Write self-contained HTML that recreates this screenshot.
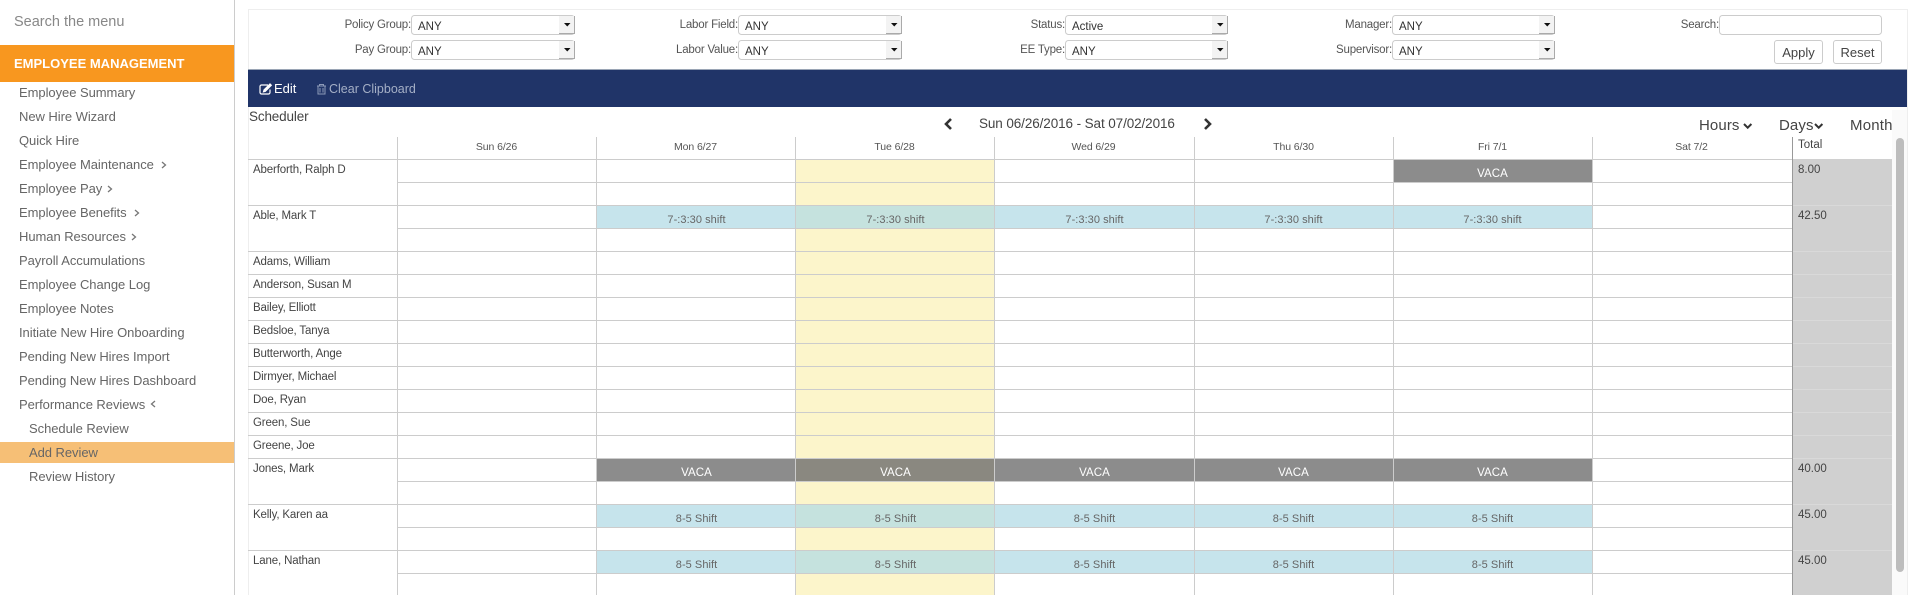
<!DOCTYPE html>
<html><head><meta charset="utf-8"><title>Scheduler</title>
<style>
html,body{margin:0;padding:0;width:1920px;height:595px;overflow:hidden;background:#fff}
body{position:relative;font-family:"Liberation Sans",sans-serif;color:#444}
svg.bg{position:absolute;left:0;top:0}
.t{position:absolute;white-space:nowrap;line-height:20px;height:20px}
.m{left:19px;font-size:13px;color:#666;letter-spacing:-.05px;margin-top:1px}
.s{left:29px}
.n{left:253px;font-size:11.5px;color:#444;letter-spacing:-.15px;margin-top:1px}
.h{font-size:10.5px;color:#555;width:199px;text-align:center;letter-spacing:-.1px;top:137px}
.b{font-size:11px;color:#666;width:199px;text-align:center;letter-spacing:.05px;margin-top:1px}
.v{font-size:11.5px;color:#fff;width:199px;text-align:center;letter-spacing:.1px;margin-top:1px}
.l{font-size:11.5px;color:#555;text-align:right;letter-spacing:-.2px;margin-top:1px}
.o{font-size:11.5px;color:#333;margin-top:1px}
.tot{left:1798px;font-size:11.5px;color:#444;margin-top:1px}
.bt{position:absolute;box-sizing:border-box;border:1px solid #ccc;border-radius:3px;font-size:13px;color:#444;text-align:center;line-height:23px;height:24px;top:40px;background:#fff}
</style></head><body>
<svg class="bg" width="1920" height="595" viewBox="0 0 1920 595" shape-rendering="crispEdges" xmlns="http://www.w3.org/2000/svg">
<!-- sidebar -->
<rect x="234" y="0" width="1" height="595" fill="#ccc"/>
<rect x="0" y="45" width="234" height="37" fill="#F8971F"/>
<rect x="0" y="442" width="234" height="21" fill="#F6BF76"/>
<!-- panel -->
<rect x="248" y="9" width="1659" height="1" fill="#eee"/>
<rect x="248" y="9" width="1" height="586" fill="#eee"/>
<rect x="1907" y="9" width="1" height="586" fill="#eee"/>
<rect x="248" y="69" width="1659" height="1" fill="#9aa5b5"/>
<rect x="248" y="70" width="1659" height="37" fill="#203468"/>
<!-- columns -->
<rect x="795" y="159" width="199" height="436" fill="#FCF5CB"/>
<rect x="1792" y="159" width="100" height="436" fill="#D0D0D0"/>
<!-- blue blocks -->
<g fill="#C6E4EC">
<rect x="596" y="206" width="996" height="22"/>
<rect x="596" y="505" width="996" height="22"/>
<rect x="596" y="551" width="996" height="22"/>
</g>
<g fill="#C5E2DE">
<rect x="795" y="206" width="199" height="22"/>
<rect x="795" y="505" width="199" height="22"/>
<rect x="795" y="551" width="199" height="22"/>
</g>
<!-- grey blocks -->
<g fill="#8C8C8C">
<rect x="1393" y="160" width="199" height="22"/>
<rect x="596" y="459" width="996" height="22"/>
</g>
<rect x="795" y="459" width="199" height="22" fill="#8A8880"/>
<!-- full width horizontal lines -->
<g fill="#CCCCCC">
<rect x="248" y="159" width="1544" height="1"/>
<rect x="248" y="205" width="1544" height="1"/>
<rect x="248" y="251" width="1544" height="1"/>
<rect x="248" y="274" width="1544" height="1"/>
<rect x="248" y="297" width="1544" height="1"/>
<rect x="248" y="320" width="1544" height="1"/>
<rect x="248" y="343" width="1544" height="1"/>
<rect x="248" y="366" width="1544" height="1"/>
<rect x="248" y="389" width="1544" height="1"/>
<rect x="248" y="412" width="1544" height="1"/>
<rect x="248" y="435" width="1544" height="1"/>
<rect x="248" y="458" width="1544" height="1"/>
<rect x="248" y="504" width="1544" height="1"/>
<rect x="248" y="550" width="1544" height="1"/>
<rect x="397" y="182" width="1395" height="1"/>
<rect x="397" y="228" width="1395" height="1"/>
<rect x="397" y="481" width="1395" height="1"/>
<rect x="397" y="527" width="1395" height="1"/>
<rect x="397" y="573" width="1395" height="1"/>
<!-- verticals -->
<rect x="397" y="137" width="1" height="458"/>
<rect x="596" y="137" width="1" height="458"/>
<rect x="795" y="137" width="1" height="458"/>
<rect x="994" y="137" width="1" height="458"/>
<rect x="1194" y="137" width="1" height="458"/>
<rect x="1393" y="137" width="1" height="458"/>
<rect x="1592" y="137" width="1" height="458"/>
</g>
<rect x="1792" y="137" width="1" height="458" fill="#999"/>
<g fill="#D9D9D9">
<rect x="1793" y="205" width="99" height="1"/><rect x="1793" y="251" width="99" height="1"/>
<rect x="1793" y="274" width="99" height="1"/><rect x="1793" y="297" width="99" height="1"/>
<rect x="1793" y="320" width="99" height="1"/><rect x="1793" y="343" width="99" height="1"/>
<rect x="1793" y="366" width="99" height="1"/><rect x="1793" y="389" width="99" height="1"/>
<rect x="1793" y="412" width="99" height="1"/><rect x="1793" y="435" width="99" height="1"/>
<rect x="1793" y="458" width="99" height="1"/><rect x="1793" y="504" width="99" height="1"/>
<rect x="1793" y="550" width="99" height="1"/>
</g>
<rect x="1892" y="110" width="15" height="485" fill="#fafafa"/>
<rect x="1896" y="138" width="8" height="434" rx="4" fill="#BDBDBD" shape-rendering="auto"/>
<!-- select boxes -->
<g fill="#fff" stroke="#ccc" shape-rendering="auto">
<rect x="411.500" y="15.500" width="163" height="19" rx="3"/><rect x="411.500" y="40.500" width="163" height="19" rx="3"/>
<rect x="738.500" y="15.500" width="163" height="19" rx="3"/><rect x="738.500" y="40.500" width="163" height="19" rx="3"/>
<rect x="1065.500" y="15.500" width="162" height="19" rx="3"/><rect x="1065.500" y="40.500" width="162" height="19" rx="3"/>
<rect x="1392.500" y="15.500" width="162" height="19" rx="3"/><rect x="1392.500" y="40.500" width="162" height="19" rx="3"/>
<rect x="1719.500" y="15.500" width="162" height="19" rx="3"/>
</g>
<!-- select arrows -->
<g>
<g><rect x="559" y="16" width="16" height="18" fill="#aaa"/><rect x="559" y="16" width="15" height="17" fill="#f3f3f3"/><path d="M564 23h6.500l-3.250 3.500z" fill="#111" shape-rendering="auto"/></g>
<g transform="translate(0,25)"><rect x="559" y="16" width="16" height="18" fill="#aaa"/><rect x="559" y="16" width="15" height="17" fill="#f3f3f3"/><path d="M564 23h6.500l-3.250 3.500z" fill="#111" shape-rendering="auto"/></g>
<g transform="translate(327,0)"><rect x="559" y="16" width="16" height="18" fill="#aaa"/><rect x="559" y="16" width="15" height="17" fill="#f3f3f3"/><path d="M564 23h6.500l-3.250 3.500z" fill="#111" shape-rendering="auto"/></g>
<g transform="translate(327,25)"><rect x="559" y="16" width="16" height="18" fill="#aaa"/><rect x="559" y="16" width="15" height="17" fill="#f3f3f3"/><path d="M564 23h6.500l-3.250 3.500z" fill="#111" shape-rendering="auto"/></g>
<g transform="translate(653,0)"><rect x="559" y="16" width="16" height="18" fill="#aaa"/><rect x="559" y="16" width="15" height="17" fill="#f3f3f3"/><path d="M564 23h6.500l-3.250 3.500z" fill="#111" shape-rendering="auto"/></g>
<g transform="translate(653,25)"><rect x="559" y="16" width="16" height="18" fill="#aaa"/><rect x="559" y="16" width="15" height="17" fill="#f3f3f3"/><path d="M564 23h6.500l-3.250 3.500z" fill="#111" shape-rendering="auto"/></g>
<g transform="translate(980,0)"><rect x="559" y="16" width="16" height="18" fill="#aaa"/><rect x="559" y="16" width="15" height="17" fill="#f3f3f3"/><path d="M564 23h6.500l-3.250 3.500z" fill="#111" shape-rendering="auto"/></g>
<g transform="translate(980,25)"><rect x="559" y="16" width="16" height="18" fill="#aaa"/><rect x="559" y="16" width="15" height="17" fill="#f3f3f3"/><path d="M564 23h6.500l-3.250 3.500z" fill="#111" shape-rendering="auto"/></g>
</g>
<!-- sidebar chevrons -->
<g fill="none" stroke="#777" stroke-width="1.300" shape-rendering="auto">
<path d="M162 162l3.500 3-3.500 3"/>
<path d="M108 186l3.500 3-3.500 3"/>
<path d="M135 210l3.500 3-3.500 3"/>
<path d="M132 234l3.500 3-3.500 3"/>
<path d="M155 401l-3.500 3 3.500 3"/>
</g>
<!-- nav chevrons -->
<g fill="none" stroke="#333" stroke-width="2.600" shape-rendering="auto">
<path d="M951 119l-5 5 5 5"/>
<path d="M1205 119l5 5-5 5"/>
</g>
<g fill="none" stroke="#333" stroke-width="2" shape-rendering="auto">
<path d="M1744 124l3.700 3.700 3.700-3.700"/>
<path d="M1815 124l3.700 3.700 3.700-3.700"/>
</g>
<!-- edit icon -->
<g fill="none" stroke="#fff" stroke-width="1.200" shape-rendering="auto">
<path d="M268 85h-6.500a1.500 1.500 0 0 0-1.500 1.500v6a1.500 1.500 0 0 0 1.500 1.500h7a1.500 1.500 0 0 0 1.500-1.500v-3"/>
<path d="M264 90l-.5 1.800 1.800-.5 6-6-1.300-1.300z" fill="#fff"/>
</g>
<!-- trash icon -->
<g fill="none" stroke="#8c9ab8" stroke-width="1" shape-rendering="auto">
<path d="M317 86h9M319.500 86v-1.500h4V86M318 86.500v7.500h7v-7.500M320 88v4.500M323 88v4.500"/>
</g>
</svg>

<div class="t" style="left:14px;top:12px;font-size:14.500px;color:#888">Search the menu</div>
<div class="t" style="left:14px;top:54px;font-size:13px;font-weight:bold;color:#fff">EMPLOYEE MANAGEMENT</div>
<div class="t m" style="top:82px">Employee Summary</div>
<div class="t m" style="top:106px">New Hire Wizard</div>
<div class="t m" style="top:130px">Quick Hire</div>
<div class="t m" style="top:154px">Employee Maintenance</div>
<div class="t m" style="top:178px">Employee Pay</div>
<div class="t m" style="top:202px">Employee Benefits</div>
<div class="t m" style="top:226px">Human Resources</div>
<div class="t m" style="top:250px">Payroll Accumulations</div>
<div class="t m" style="top:274px">Employee Change Log</div>
<div class="t m" style="top:298px">Employee Notes</div>
<div class="t m" style="top:322px">Initiate New Hire Onboarding</div>
<div class="t m" style="top:346px">Pending New Hires Import</div>
<div class="t m" style="top:370px">Pending New Hires Dashboard</div>
<div class="t m" style="top:394px">Performance Reviews</div>
<div class="t m s" style="top:418px">Schedule Review</div>
<div class="t m s" style="top:442px">Add Review</div>
<div class="t m s" style="top:466px">Review History</div>

<div class="t l" style="left:311px;width:100px;top:14px">Policy Group:</div>
<div class="t l" style="left:311px;width:100px;top:39px">Pay Group:</div>
<div class="t l" style="left:638px;width:100px;top:14px">Labor Field:</div>
<div class="t l" style="left:638px;width:100px;top:39px">Labor Value:</div>
<div class="t l" style="left:965px;width:100px;top:14px">Status:</div>
<div class="t l" style="left:965px;width:100px;top:39px">EE Type:</div>
<div class="t l" style="left:1292px;width:100px;top:14px">Manager:</div>
<div class="t l" style="left:1292px;width:100px;top:39px">Supervisor:</div>
<div class="t l" style="left:1619px;width:100px;top:14px">Search:</div>
<div class="t o" style="left:418px;top:16px">ANY</div>
<div class="t o" style="left:418px;top:41px">ANY</div>
<div class="t o" style="left:745px;top:16px">ANY</div>
<div class="t o" style="left:745px;top:41px">ANY</div>
<div class="t o" style="left:1072px;top:16px">Active</div>
<div class="t o" style="left:1072px;top:41px">ANY</div>
<div class="t o" style="left:1399px;top:16px">ANY</div>
<div class="t o" style="left:1399px;top:41px">ANY</div>
<div class="bt" style="left:1774px;width:49px">Apply</div>
<div class="bt" style="left:1833px;width:49px">Reset</div>

<div class="t" style="left:274px;top:79px;font-size:13px;color:#fff">Edit</div>
<div class="t" style="left:329px;top:79px;font-size:12.500px;color:#a4afc6">Clear Clipboard</div>
<div class="t" style="left:249px;top:107px;font-size:13.500px;color:#444;letter-spacing:-.15px">Scheduler</div>
<div class="t" style="left:979px;top:114px;font-size:13.500px;color:#444;letter-spacing:-.1px">Sun 06/26/2016 - Sat 07/02/2016</div>
<div class="t" style="left:1699px;top:116px;font-size:15px;color:#444;letter-spacing:.1px">Hours</div>
<div class="t" style="left:1779px;top:116px;font-size:15px;color:#444;letter-spacing:.1px">Days</div>
<div class="t" style="left:1850px;top:116px;font-size:15px;color:#444;letter-spacing:.2px">Month</div>

<div class="t h" style="left:397px">Sun 6/26</div>
<div class="t h" style="left:596px">Mon 6/27</div>
<div class="t h" style="left:795px">Tue 6/28</div>
<div class="t h" style="left:994px">Wed 6/29</div>
<div class="t h" style="left:1194px">Thu 6/30</div>
<div class="t h" style="left:1393px">Fri 7/1</div>
<div class="t h" style="left:1592px">Sat 7/2</div>
<div class="t tot" style="top:134px">Total</div>

<div class="t n" style="top:159px">Aberforth, Ralph D</div>
<div class="t n" style="top:205px">Able, Mark T</div>
<div class="t n" style="top:251px">Adams, William</div>
<div class="t n" style="top:274px">Anderson, Susan M</div>
<div class="t n" style="top:297px">Bailey, Elliott</div>
<div class="t n" style="top:320px">Bedsloe, Tanya</div>
<div class="t n" style="top:343px">Butterworth, Ange</div>
<div class="t n" style="top:366px">Dirmyer, Michael</div>
<div class="t n" style="top:389px">Doe, Ryan</div>
<div class="t n" style="top:412px">Green, Sue</div>
<div class="t n" style="top:435px">Greene, Joe</div>
<div class="t n" style="top:458px">Jones, Mark</div>
<div class="t n" style="top:504px">Kelly, Karen aa</div>
<div class="t n" style="top:550px">Lane, Nathan</div>

<div class="t tot" style="top:159px">8.00</div>
<div class="t tot" style="top:205px">42.50</div>
<div class="t tot" style="top:458px">40.00</div>
<div class="t tot" style="top:504px">45.00</div>
<div class="t tot" style="top:550px">45.00</div>

<div class="t v" style="left:1393px;top:163px">VACA</div>

<div class="t b" style="left:597px;top:209px">7-:3:30 shift</div>
<div class="t b" style="left:796px;top:209px">7-:3:30 shift</div>
<div class="t b" style="left:995px;top:209px">7-:3:30 shift</div>
<div class="t b" style="left:1194px;top:209px">7-:3:30 shift</div>
<div class="t b" style="left:1393px;top:209px">7-:3:30 shift</div>

<div class="t v" style="left:597px;top:462px">VACA</div>
<div class="t v" style="left:796px;top:462px">VACA</div>
<div class="t v" style="left:995px;top:462px">VACA</div>
<div class="t v" style="left:1194px;top:462px">VACA</div>
<div class="t v" style="left:1393px;top:462px">VACA</div>

<div class="t b" style="left:597px;top:508px">8-5 Shift</div>
<div class="t b" style="left:796px;top:508px">8-5 Shift</div>
<div class="t b" style="left:995px;top:508px">8-5 Shift</div>
<div class="t b" style="left:1194px;top:508px">8-5 Shift</div>
<div class="t b" style="left:1393px;top:508px">8-5 Shift</div>

<div class="t b" style="left:597px;top:554px">8-5 Shift</div>
<div class="t b" style="left:796px;top:554px">8-5 Shift</div>
<div class="t b" style="left:995px;top:554px">8-5 Shift</div>
<div class="t b" style="left:1194px;top:554px">8-5 Shift</div>
<div class="t b" style="left:1393px;top:554px">8-5 Shift</div>
</body></html>
